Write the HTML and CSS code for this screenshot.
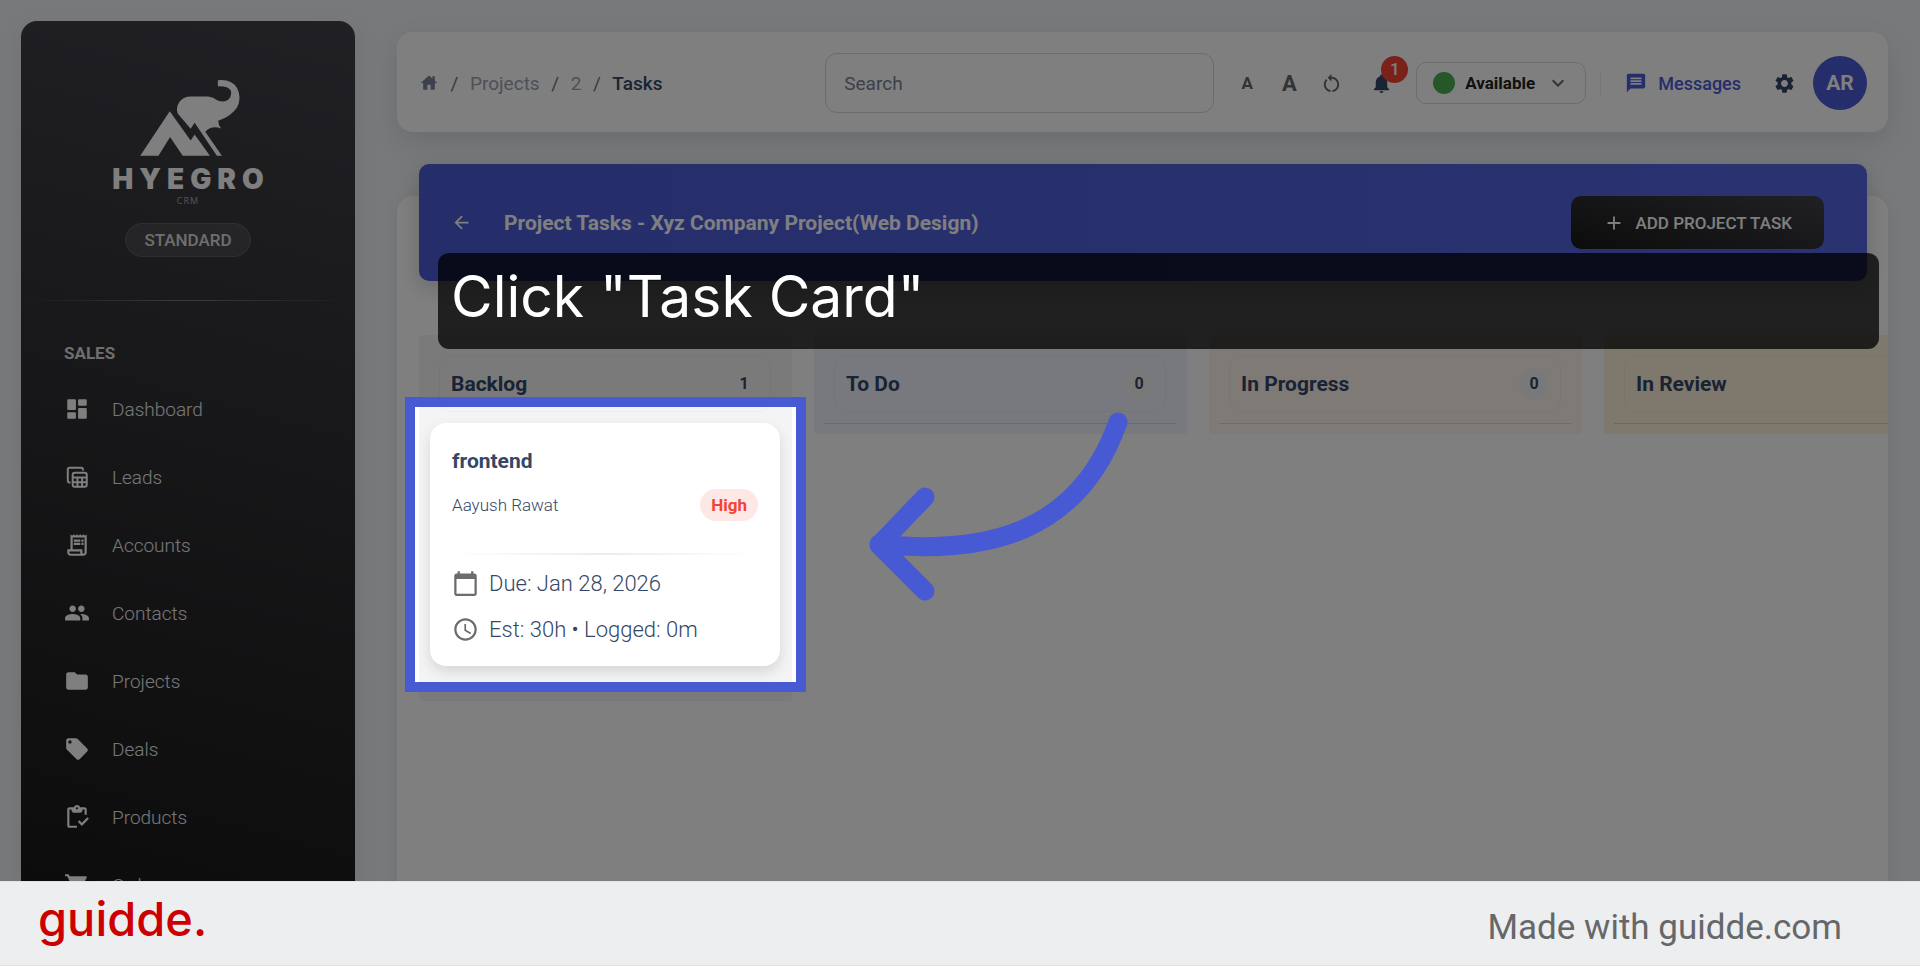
FILE: index.html
```html
<!DOCTYPE html>
<html lang="en">
<head>
    <meta charset="UTF-8">
    <meta name="viewport" content="width=device-width, initial-scale=1.0">
    <title>Hyegro CRM - Project Tasks</title>
    <link rel="stylesheet" href="styles.css">
</head>
<body>
    <div class="stage">
        <aside class="sidebar">
            <div class="brand">
                <svg class="brand-logo" viewBox="412 235 310 235" fill="currentColor" aria-hidden="true">
                    <path d="M512 332L575 420L587 402L633 466H551L513 410L478 466H423Z"/>
                    <path d="M575 385L536 339Q530 322 540 306Q551 289 572 288H628Q644 290 655 299Q675 308 689 297Q700 285 696 270Q688 256 657 257V239Q699 234 716 264Q729 293 715 320Q698 347 658 361Q658 374 667 384Q638 374 619 394L669 466H654L587 367Z"/>
                </svg>
                <span class="brand-name">HYEGRO</span>
                <span class="brand-sub">CRM</span>
                <span class="plan">STANDARD</span>
            </div>
            <hr class="sidebar-line">
            <h2 class="nav-title">SALES</h2>
            <nav class="nav">
                <a href="#" class="nav-item">
                    <svg class="nav-icon" viewBox="0 0 24 24" fill="currentColor"><path d="M4 13h6c.55 0 1-.45 1-1V4c0-.55-.45-1-1-1H4c-.55 0-1 .45-1 1v8c0 .55.45 1 1 1zm0 8h6c.55 0 1-.45 1-1v-4c0-.55-.45-1-1-1H4c-.55 0-1 .45-1 1v4c0 .55.45 1 1 1zm10 0h6c.55 0 1-.45 1-1v-8c0-.55-.45-1-1-1h-6c-.55 0-1 .45-1 1v8c0 .55.45 1 1 1zM13 4v4c0 .55.45 1 1 1h6c.55 0 1-.45 1-1V4c0-.55-.45-1-1-1h-6c-.55 0-1 .45-1 1z"/></svg>
                    Dashboard
                </a>
                <a href="#" class="nav-item">
                    <svg class="nav-icon" viewBox="0 0 24 24" fill="none" stroke="currentColor" stroke-width="1.8"><path d="M6 17H5c-1 0-1.500-.5-1.500-1.500V5C3.500 4 4 3.500 5 3.500h11c1 0 1.500.5 1.500 1.500v1"/><rect x="8" y="8" width="13" height="13" rx="1.800"/><path d="M8 12.500h13M8 16.800h13M12.400 12.500V21M16.700 12.500V21"/></svg>
                    Leads
                </a>
                <a href="#" class="nav-item">
                    <svg class="nav-icon" viewBox="0 0 24 24" fill="currentColor"><path d="M19.500 3.500 18 2l-1.500 1.500L15 2l-1.500 1.500L12 2l-1.500 1.500L9 2 7.500 3.500 6 2v14H3v3c0 1.660 1.340 3 3 3h12c1.660 0 3-1.340 3-3V2l-1.500 1.500zM15 20H6c-.55 0-1-.45-1-1v-1h10v2zm4-1c0 .55-.45 1-1 1s-1-.45-1-1v-3H8V5h11v14z"/><path d="M9 7h6v2H9zM16 7h2v2h-2zM9 10h6v2H9zM16 10h2v2h-2z"/></svg>
                    Accounts
                </a>
                <a href="#" class="nav-item">
                    <svg class="nav-icon" viewBox="0 0 24 24" fill="currentColor"><path d="M16 11c1.660 0 2.990-1.340 2.990-3S17.660 5 16 5c-1.660 0-3 1.340-3 3s1.340 3 3 3zm-8 0c1.660 0 2.990-1.340 2.990-3S9.660 5 8 5C6.340 5 5 6.340 5 8s1.340 3 3 3zm0 2c-2.330 0-7 1.170-7 3.500V19h14v-2.500c0-2.330-4.670-3.500-7-3.500zm8 0c-.29 0-.62.02-.97.05 1.160.84 1.970 1.970 1.970 3.450V19h6v-2.500c0-2.330-4.670-3.500-7-3.500z"/></svg>
                    Contacts
                </a>
                <a href="#" class="nav-item">
                    <svg class="nav-icon" viewBox="0 0 24 24" fill="currentColor"><path d="M10 4H4c-1.100 0-1.990.9-1.990 2L2 18c0 1.100.9 2 2 2h16c1.100 0 2-.9 2-2V8c0-1.100-.9-2-2-2h-8l-2-2z"/></svg>
                    Projects
                </a>
                <a href="#" class="nav-item">
                    <svg class="nav-icon" viewBox="0 0 24 24" fill="currentColor"><path d="m21.410 11.580-9-9C12.050 2.220 11.550 2 11 2H4c-1.100 0-2 .9-2 2v7c0 .55.22 1.050.59 1.420l9 9c.36.36.86.58 1.410.58.55 0 1.050-.22 1.410-.59l7-7c.37-.36.59-.86.59-1.410 0-.55-.23-1.060-.59-1.420zM5.500 7C4.670 7 4 6.330 4 5.500S4.670 4 5.500 4 7 4.670 7 5.500 6.330 7 5.500 7z"/></svg>
                    Deals
                </a>
                <a href="#" class="nav-item">
                    <svg class="nav-icon" viewBox="0 0 24 24" fill="currentColor"><path d="M5 5h2v1c0 1.100.9 2 2 2h6c1.100 0 2-.9 2-2V5h2v5h2V5c0-1.100-.9-2-2-2h-4.180C14.400 1.840 13.300 1 12 1s-2.400.84-2.820 2H5c-1.100 0-2 .9-2 2v15c0 1.100.9 2 2 2h7v-2H5V5zm7-2c.55 0 1 .45 1 1s-.45 1-1 1-1-.45-1-1 .45-1 1-1z"/><path d="M21.600 12.300l-5.100 5.100-2.400-2.400-1.400 1.400 3.800 3.800 6.500-6.500z"/></svg>
                    Products
                </a>
                <a href="#" class="nav-item">
                    <svg class="nav-icon" viewBox="0 0 24 24" fill="currentColor"><path d="M7 18c-1.100 0-1.990.9-1.990 2S5.900 22 7 22s2-.9 2-2-.9-2-2-2zM1 2v2h2l3.600 7.590-1.350 2.450c-.16.28-.25.61-.25.96 0 1.100.9 2 2 2h12v-2H7.420c-.14 0-.25-.11-.25-.25l.03-.12.9-1.630h7.450c.75 0 1.410-.41 1.750-1.030l3.580-6.490c.08-.14.12-.31.12-.48 0-.55-.45-1-1-1H5.210l-.94-2H1z"/></svg>
                    Orders
                </a>
            </nav>
        </aside>

        <main class="main">
            <header class="topbar">
                <nav class="breadcrumb" aria-label="Breadcrumb">
                    <a href="#" class="crumb-home" aria-label="Home"><svg viewBox="0 0 24 24" fill="currentColor"><path d="M10 20v-6h4v6h5v-8h3L19 9.300V4h-3v2.600L12 3 2 12h3v8z"/></svg></a>
                    <span class="crumb-sep">/</span>
                    <a href="#" class="crumb">Projects</a>
                    <span class="crumb-sep">/</span>
                    <a href="#" class="crumb">2</a>
                    <span class="crumb-sep">/</span>
                    <span class="crumb current">Tasks</span>
                </nav>
                <input type="text" class="search" placeholder="Search" aria-label="Search">
                <div class="tools">
                    <button class="tool font-small" aria-label="Decrease font size">A</button>
                    <button class="tool font-large" aria-label="Increase font size">A</button>
                    <button class="tool" aria-label="Reset font size">
                        <svg viewBox="0 0 24 24" fill="currentColor"><path d="M12 5V2L8 6l4 4V7c3.310 0 6 2.690 6 6 0 2.970-2.170 5.430-5 5.910v2.020c3.950-.49 7-3.850 7-7.930 0-4.420-3.580-8-8-8zm-6 8c0-1.650.67-3.150 1.760-4.240L6.340 7.340C4.900 8.790 4 10.790 4 13c0 4.080 3.050 7.440 7 7.930v-2.020c-2.830-.48-5-2.940-5-5.910z"/></svg>
                    </button>
                    <button class="tool bell" aria-label="Notifications">
                        <svg viewBox="0 0 24 24" fill="currentColor"><path d="M12 22c1.100 0 2-.9 2-2h-4c0 1.100.89 2 2 2zm6-6v-5c0-3.070-1.640-5.640-4.500-6.320V4c0-.83-.67-1.500-1.500-1.500s-1.500.67-1.500 1.500v.68C7.630 5.360 6 7.920 6 11v5l-2 2v1h16v-1l-2-2z"/></svg>
                        <span class="badge">1</span>
                    </button>
                </div>
                <div class="status">
                    <span class="status-dot"></span>
                    <select class="status-select" aria-label="Status">
                        <option>Available</option>
                        <option>Busy</option>
                        <option>Away</option>
                    </select>
                    <svg class="status-arrow" viewBox="0 0 24 24" fill="currentColor"><path d="M7.410 8.590 12 13.170l4.590-4.580L18 10l-6 6-6-6z"/></svg>
                </div>
                <a href="#" class="messages">
                    <svg viewBox="0 0 24 24" fill="currentColor"><path d="M20 2H4c-1.100 0-1.990.9-1.990 2L2 22l4-4h14c1.100 0 2-.9 2-2V4c0-1.100-.9-2-2-2zm-2 12H6v-2h12v2zm0-3H6V9h12v2zm0-3H6V6h12v2z"/></svg>
                    Messages
                </a>
                <button class="tool settings" aria-label="Settings">
                    <svg viewBox="0 0 24 24" fill="currentColor"><path d="M19.140 12.940c.04-.3.060-.61.060-.94 0-.32-.02-.64-.07-.94l2.030-1.580c.18-.14.23-.41.12-.61l-1.920-3.320c-.12-.22-.37-.29-.59-.22l-2.390.96c-.5-.38-1.030-.7-1.620-.94l-.36-2.540c-.04-.24-.24-.41-.48-.41h-3.840c-.24 0-.43.17-.47.41l-.36 2.540c-.59.24-1.130.57-1.620.94l-2.390-.96c-.22-.08-.47 0-.59.22L2.740 8.870c-.12.21-.08.47.12.61l2.030 1.580c-.05.3-.09.63-.09.94s.02.64.07.94l-2.030 1.580c-.18.14-.23.41-.12.61l1.920 3.320c.12.22.37.29.59.22l2.390-.96c.5.38 1.030.7 1.620.94l.36 2.540c.05.24.24.41.48.41h3.840c.24 0 .44-.17.47-.41l.36-2.540c.59-.24 1.130-.56 1.620-.94l2.390.96c.22.08.47 0 .59-.22l1.920-3.320c.12-.22.07-.47-.12-.61l-2.010-1.580zM12 15.600c-1.980 0-3.600-1.620-3.600-3.600s1.620-3.600 3.600-3.600 3.600 1.620 3.600 3.600-1.620 3.600-3.600 3.600z"/></svg>
                </button>
                <button class="avatar">AR</button>
            </header>

            <section class="panel">
                <div class="banner">
                    <a href="#" class="back" aria-label="Back"><svg viewBox="0 0 24 24" fill="currentColor"><path d="M20 11H7.830l5.590-5.590L12 4l-8 8 8 8 1.410-1.410L7.830 13H20v-2z"/></svg></a>
                    <h1 class="banner-title">Project Tasks - Xyz Company Project(Web Design)</h1>
                    <button class="add-task">
                        <svg viewBox="0 0 24 24" fill="currentColor"><path d="M19 13h-6v6h-2v-6H5v-2h6V5h2v6h6v2z"/></svg>
                        ADD PROJECT TASK
                    </button>
                </div>

                <div class="board">
                    <section class="column backlog">
                        <header class="column-head"><h2>Backlog</h2><span class="count">1</span></header>
                        <article class="task">
                            <h3 class="task-title">frontend</h3>
                            <div class="task-row">
                                <span class="assignee">Aayush Rawat</span>
                                <span class="priority">High</span>
                            </div>
                            <hr class="task-line">
                            <p class="task-meta">
                                <svg viewBox="0 0 24 24" fill="currentColor"><path d="M20 3h-1V1h-2v2H7V1H5v2H4c-1.100 0-2 .9-2 2v16c0 1.100.9 2 2 2h16c1.100 0 2-.9 2-2V5c0-1.100-.9-2-2-2zm0 18H4V8h16v13z"/></svg>
                                Due: Jan 28, 2026
                            </p>
                            <p class="task-meta">
                                <svg viewBox="0 0 24 24" fill="currentColor"><path d="M11.990 2C6.470 2 2 6.480 2 12s4.470 10 9.990 10C17.520 22 22 17.520 22 12S17.520 2 11.990 2zM12 20c-4.420 0-8-3.580-8-8s3.580-8 8-8 8 3.580 8 8-3.580 8-8 8zm.5-13H11v6l5.250 3.150.75-1.230-4.500-2.670z"/></svg>
                                Est: 30h • Logged: 0m
                            </p>
                        </article>
                    </section>
                    <section class="column todo">
                        <header class="column-head"><h2>To Do</h2><span class="count">0</span></header>
                    </section>
                    <section class="column progress">
                        <header class="column-head"><h2>In Progress</h2><span class="count">0</span></header>
                    </section>
                    <section class="column review">
                        <header class="column-head"><h2>In Review</h2></header>
                    </section>
                </div>
            </section>
        </main>

        <!-- Guide step: dimmed page, highlighted card, caption and arrow -->
        <div class="spotlight"></div>
        <div class="caption">Click "Task Card"</div>
        <svg class="arrow" viewBox="860 400 280 220" fill="none" stroke="currentColor" stroke-width="19" stroke-linecap="round" stroke-linejoin="round" aria-hidden="true">
            <path d="M1118 422C1080 530 990 556 879 544M925 497L879 545L925 591"/>
        </svg>
    </div>

    <footer class="footer">
        <a href="#" class="guidde">guidde.</a>
        <span class="made-with">Made with guidde.com</span>
    </footer>
</body>
</html>
```
FILE: styles.css
```css
* {
    margin: 0;
    padding: 0;
    box-sizing: border-box;
}

body {
    font-family: Roboto, "Liberation Sans", sans-serif;
    font-size: 19px;
    color: #344767;
    height: 100vh;
    display: flex;
    flex-direction: column;
    overflow: hidden;
}

a {
    color: inherit;
    text-decoration: none;
}

button,
input,
select {
    font: inherit;
    color: inherit;
    border: none;
    background: none;
}

button {
    cursor: pointer;
}

svg {
    display: block;
    flex-shrink: 0;
}

.stage {
    position: relative;
    flex: 1;
    min-height: 0;
    display: flex;
    overflow: hidden;
    background: #f0f2f5;
}

/* Sidebar */
.sidebar {
    width: 334px;
    flex-shrink: 0;
    margin: 21px 0 0 21px;
    border-radius: 16px 16px 0 0;
    background: linear-gradient(195deg, #42424a, #191919);
    box-shadow: 0 8px 28px rgba(0, 0, 0, 0.08);
    color: #fff;
}

.brand {
    display: flex;
    flex-direction: column;
    align-items: center;
    padding-top: 58px;
}

.brand-logo {
    width: 104px;
    height: 78px;
}

.brand-name {
    margin-top: 6px;
    font-family: Inter, sans-serif;
    font-size: 28px;
    line-height: 32px;
    font-weight: 900;
    letter-spacing: 6px;
    margin-right: -6px;
}

.brand-sub {
    font-family: "Open Sans", sans-serif;
    font-size: 9px;
    line-height: 12px;
    letter-spacing: 1px;
    color: #aaa;
}

.plan {
    margin-top: 16px;
    padding: 0 18px;
    border: 1px solid #5e5e62;
    border-radius: 17px;
    background: rgba(255, 255, 255, 0.1);
    font-size: 17px;
    line-height: 32px;
    font-weight: 500;
    color: #ddd;
}

.sidebar-line {
    margin-top: 43px;
    height: 1px;
    border: none;
    background: linear-gradient(90deg, transparent, #77777b, transparent);
}

.nav-title {
    margin: 42px 0 12px 43px;
    font-size: 17px;
    line-height: 20px;
    font-weight: 700;
    color: #ddd;
}

.nav-item {
    display: flex;
    align-items: center;
    gap: 22px;
    height: 68px;
    padding-left: 43px;
    font-weight: 300;
    color: #eee;
}

.nav-icon {
    width: 26px;
    height: 26px;
    color: #fff;
}

/* Top bar */
.main {
    flex: 1;
    min-width: 0;
    display: flex;
    flex-direction: column;
    padding: 32px 32px 0 42px;
}

.topbar {
    display: flex;
    align-items: center;
    min-height: 100px;
    padding: 2px 21px 0 22px;
    border-radius: 16px;
    background: #fff;
    box-shadow: 0 10px 28px rgba(0, 0, 0, 0.1);
}

.breadcrumb {
    flex: 1;
    display: flex;
    align-items: center;
}

.crumb-home svg {
    width: 20px;
    height: 20px;
    color: #7b809a;
}

.crumb-sep {
    width: 31px;
    text-align: center;
    color: #6c757d;
}

.crumb {
    color: #9a9fb2;
}

.crumb.current {
    color: #344767;
    font-weight: 500;
}

.search {
    width: 389px;
    height: 60px;
    padding: 0 18px;
    border: 1px solid #d2d6da;
    border-radius: 12px;
}

.search::placeholder {
    color: #7b809a;
    opacity: 1;
}

.tools {
    display: flex;
    padding: 0 14px 0 12px;
}

.tool {
    position: relative;
    display: flex;
    align-items: center;
    justify-content: center;
    width: 42px;
    height: 42px;
    color: #666;
}

.tool svg {
    width: 23px;
    height: 23px;
}

.font-small {
    font-size: 17px;
    font-weight: 700;
}

.font-large {
    font-size: 22px;
    font-weight: 700;
}

.bell {
    margin-left: 8px;
    color: #344767;
}

.badge {
    position: absolute;
    top: -6px;
    left: 21px;
    width: 27px;
    height: 27px;
    border-radius: 50%;
    background: #f44335;
    color: #fff;
    font-size: 17px;
    line-height: 27px;
    font-weight: 500;
    text-align: center;
}

.status {
    position: relative;
    width: 170px;
}

.status-select {
    width: 100%;
    height: 42px;
    padding-left: 48px;
    border: 1px solid #d8d8d8;
    border-radius: 10px;
    appearance: none;
    color: #222;
    font-size: 17px;
    font-weight: 700;
}

.status-dot {
    position: absolute;
    top: 10px;
    left: 17px;
    width: 22px;
    height: 22px;
    border-radius: 50%;
    background: #4caf50;
}

.status-arrow {
    position: absolute;
    top: 9px;
    right: 16px;
    width: 24px;
    height: 24px;
    color: #666;
    pointer-events: none;
}

.messages {
    display: flex;
    align-items: center;
    gap: 11px;
    height: 26px;
    margin-left: 14px;
    padding: 0 22px 0 24px;
    border-left: 1px solid #f0f0f0;
    color: #4a5ad4;
    font-size: 18px;
    font-weight: 500;
}

.messages svg {
    width: 22px;
    height: 22px;
}

.settings {
    color: #344767;
    margin-right: 8px;
}

.avatar {
    width: 54px;
    height: 54px;
    border-radius: 50%;
    background: #4a5ad4;
    color: #fff;
    font-size: 21px;
    font-weight: 700;
}

/* Task board */
.panel {
    flex: 1;
    margin-top: 64px;
    border-radius: 16px 16px 0 0;
    background: #fff;
    box-shadow: 0 4px 16px rgba(0, 0, 0, 0.08);
}

.banner {
    display: flex;
    align-items: center;
    min-height: 117px;
    margin: -32px 21px 0 22px;
    padding: 0 43px 0 32px;
    border-radius: 10px;
    background: linear-gradient(90deg, #4a5ad4, #5565e2);
    box-shadow: 0 6px 22px rgba(0, 0, 0, 0.18);
    color: #fff;
}

.back svg {
    width: 21px;
    height: 21px;
}

.banner-title {
    flex: 1;
    margin-left: 32px;
    font-size: 21px;
    font-weight: 700;
}

.add-task {
    display: flex;
    align-items: center;
    gap: 10px;
    height: 53px;
    padding: 0 32px;
    border-radius: 10px;
    background: linear-gradient(195deg, #42424a, #191919);
    font-size: 17px;
    font-weight: 500;
    color: #fff;
}

.add-task svg {
    width: 22px;
    height: 22px;
}

.board {
    display: flex;
    align-items: flex-start;
    gap: 22px;
    margin-top: 54px;
    padding-left: 22px;
    overflow: hidden;
}

.column {
    flex: 0 0 373px;
    padding: 20px 11px 10px 10px;
    border-radius: 4px;
}

.column-head {
    display: flex;
    align-items: center;
    justify-content: space-between;
    height: 57px;
    margin: 0 10px 11px;
    padding: 0 11px;
    border: 1px solid rgba(0, 0, 0, 0.03);
    border-radius: 12px;
}

.column-head h2 {
    font-size: 21px;
    font-weight: 700;
}

.count {
    width: 30px;
    height: 30px;
    border-radius: 50%;
    background: #f0f2f5;
    font-size: 16px;
    line-height: 30px;
    font-weight: 700;
    text-align: center;
}

.column::after {
    content: "";
    display: block;
    height: 1px;
    background: rgba(0, 0, 0, 0.12);
}

.backlog {
    background: #f4f4f4;
    padding-bottom: 35px;
}

.backlog::after {
    display: none;
}

.backlog .count {
    background: #f4f4f4;
}

.todo {
    background: #f0f2fd;
}

.todo .count {
    background: #f2f2f5;
}

.progress {
    background: #fef4ed;
}

.review {
    background: #fcf0da;
}

.task {
    padding: 23px 22px 14px;
    margin: 0 1px;
    border-radius: 16px;
    background: #fff;
    box-shadow: 0 6px 14px rgba(0, 0, 0, 0.12);
}

.task-title {
    font-size: 21px;
    line-height: 30px;
    font-weight: 700;
}

.task-row {
    display: flex;
    align-items: center;
    justify-content: space-between;
    margin-top: 13px;
}

.assignee {
    font-size: 17px;
    font-weight: 300;
}

.priority {
    padding: 0 11px;
    border-radius: 16px;
    background: #fde8e6;
    color: #f44335;
    font-size: 17px;
    line-height: 32px;
    font-weight: 700;
}

.task-line {
    height: 2px;
    margin: 32px 0 5px;
    border: none;
    background: linear-gradient(90deg, transparent, #ececec, transparent);
}

.task-meta {
    display: flex;
    align-items: center;
    gap: 10px;
    height: 46px;
    font-size: 22px;
    font-weight: 300;
}

.task-meta svg {
    width: 27px;
    height: 27px;
    color: #6c6c6c;
}

/* Guide overlay */
.spotlight {
    position: absolute;
    top: 397px;
    left: 405px;
    width: 401px;
    height: 295px;
    border: 10px solid #475ad3;
    box-shadow: 0 0 0 2000px rgba(0, 0, 0, 0.5);
    pointer-events: none;
}

.caption {
    position: absolute;
    top: 253px;
    left: 438px;
    right: 41px;
    height: 96px;
    padding-left: 13px;
    border-radius: 11px;
    background: rgba(0, 0, 0, 0.75);
    color: #fff;
    font-family: Inter, sans-serif;
    font-size: 57px;
    line-height: 87px;
}

.arrow {
    position: absolute;
    top: 400px;
    left: 860px;
    width: 280px;
    height: 220px;
    color: #475ad3;
    pointer-events: none;
}

.footer {
    display: flex;
    align-items: center;
    justify-content: space-between;
    height: 85px;
    padding: 0 78px 0 38px;
    border-top: 1px solid #e2e3e5;
    border-bottom: 1px solid #e2e3e5;
    background: #edeef0;
}

.guidde {
    margin-bottom: 10px;
    font-family: Inter, sans-serif;
    font-size: 47px;
    line-height: 60px;
    font-weight: 500;
    color: #c00;
}

.made-with {
    padding-top: 8px;
    font-size: 35px;
    color: #666769;
}
```
